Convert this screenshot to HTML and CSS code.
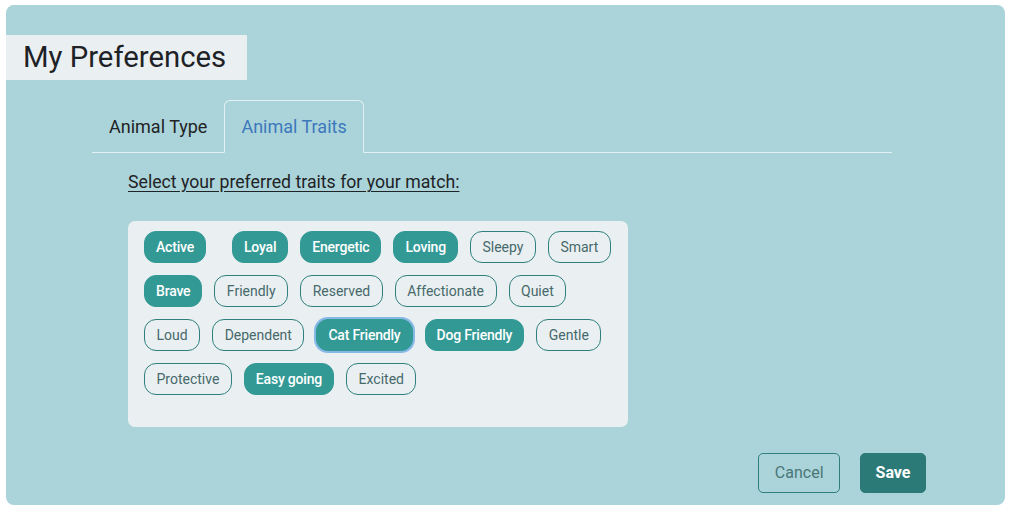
FILE: index.html
```html
<!DOCTYPE html>
<html lang="en">
<head>
<meta charset="utf-8">
<title>My Preferences</title>
<link rel="stylesheet" href="styles.css">
</head>
<body>
<div class="card">
  <h1 class="title">My Preferences</h1>
  <div class="tabs">
    <nav class="tab-nav">
      <a class="tab">Animal Type</a>
      <a class="tab active">Animal Traits</a>
    </nav>
    <div class="tab-body">
      <p class="prompt">Select your preferred traits for your match:</p>
      <div class="traits">
        <span class="chip on extra">Active</span>
        <span class="chip on">Loyal</span>
        <span class="chip on">Energetic</span>
        <span class="chip on">Loving</span>
        <span class="chip">Sleepy</span>
        <span class="chip">Smart</span>
        <span class="chip on">Brave</span>
        <span class="chip">Friendly</span>
        <span class="chip">Reserved</span>
        <span class="chip">Affectionate</span>
        <span class="chip">Quiet</span>
        <span class="chip">Loud</span>
        <span class="chip">Dependent</span>
        <span class="chip on focus">Cat Friendly</span>
        <span class="chip on">Dog Friendly</span>
        <span class="chip">Gentle</span>
        <span class="chip">Protective</span>
        <span class="chip on">Easy going</span>
        <span class="chip">Excited</span>
      </div>
    </div>
  </div>
  <div class="actions">
    <button class="btn cancel">Cancel</button>
    <button class="btn save">Save</button>
  </div>
</div>
</body>
</html>
```
FILE: styles.css
```css
* { box-sizing: border-box; }
html, body { margin: 0; padding: 0; background: #ffffff; }
body { font-family: Roboto, "Liberation Sans", sans-serif; color: #1f2326; }

.card {
  margin: 5px 7px 0 6px;
  height: 500px;
  background: #aad4d9;
  border-radius: 8px;
  padding-top: 30px;
  overflow: hidden;
}

.title {
  display: inline-block;
  margin: 0;
  padding: 5px 21px 5px 17px;
  background: #eaf0f2;
  font-size: 29.3px;
  font-weight: 400;
  line-height: 35px;
  color: #1e2226;
}

.tabs {
  margin: 20px 113px 0 86px;
}

.tab-nav {
  display: flex;
  border-bottom: 1px solid #e1f1f3;
}

.tab {
  display: block;
  padding: 12px 16px;
  border: 1px solid transparent;
  border-radius: 6px 6px 0 0;
  margin-bottom: -1px;
  font-size: 18px;
  line-height: 27px;
  color: #1f2326;
}

.tab.active {
  color: #3d78bd;
  border-color: #e1f1f3;
  border-bottom-color: #aad4d9;
}

.tab-body {
  padding-left: 36px;
}

.prompt {
  margin: 16px 0 0;
  font-size: 17.7px;
  line-height: 26px;
  text-decoration: underline;
  text-underline-offset: 3px;
  color: #1f2326;
}

.traits {
  margin-top: 26px;
  width: 500px;
  height: 206px;
  padding: 10px 16px;
  background: #eaf0f2;
  border-radius: 7px;
  display: flex;
  flex-wrap: wrap;
  align-content: flex-start;
  gap: 12px;
}

.chip {
  display: inline-block;
  height: 32px;
  padding: 5px 11.5px;
  border: 1px solid #2f7f7c;
  border-radius: 12px;
  font-size: 14px;
  line-height: 20px;
  color: #46696b;
  white-space: nowrap;
}

.chip.on {
  padding: 5px 11px;
  background: #339995;
  border-color: #339995;
  color: #ffffff;
  font-weight: 500;
  letter-spacing: -0.2px;
}

.chip.extra { margin-right: 14px; }

.chip.focus {
  box-shadow: 0 0 0 2px #86b8e6;
}

.actions {
  display: flex;
  justify-content: flex-end;
  gap: 20px;
  margin: 26px 79px 0 0;
}

.btn {
  height: 40px;
  padding: 0 15.5px;
  border-radius: 5px;
  font-family: Roboto, "Liberation Sans", sans-serif;
  font-size: 16px;
  line-height: 38px;
}

.btn.cancel {
  background: transparent;
  border: 1px solid #2f7f7c;
  color: #4a7777;
}

.btn.save {
  padding: 0 14.5px;
  background: #2c7a78;
  border: 1px solid #2c7a78;
  color: #ffffff;
  font-weight: 700;
}
```
